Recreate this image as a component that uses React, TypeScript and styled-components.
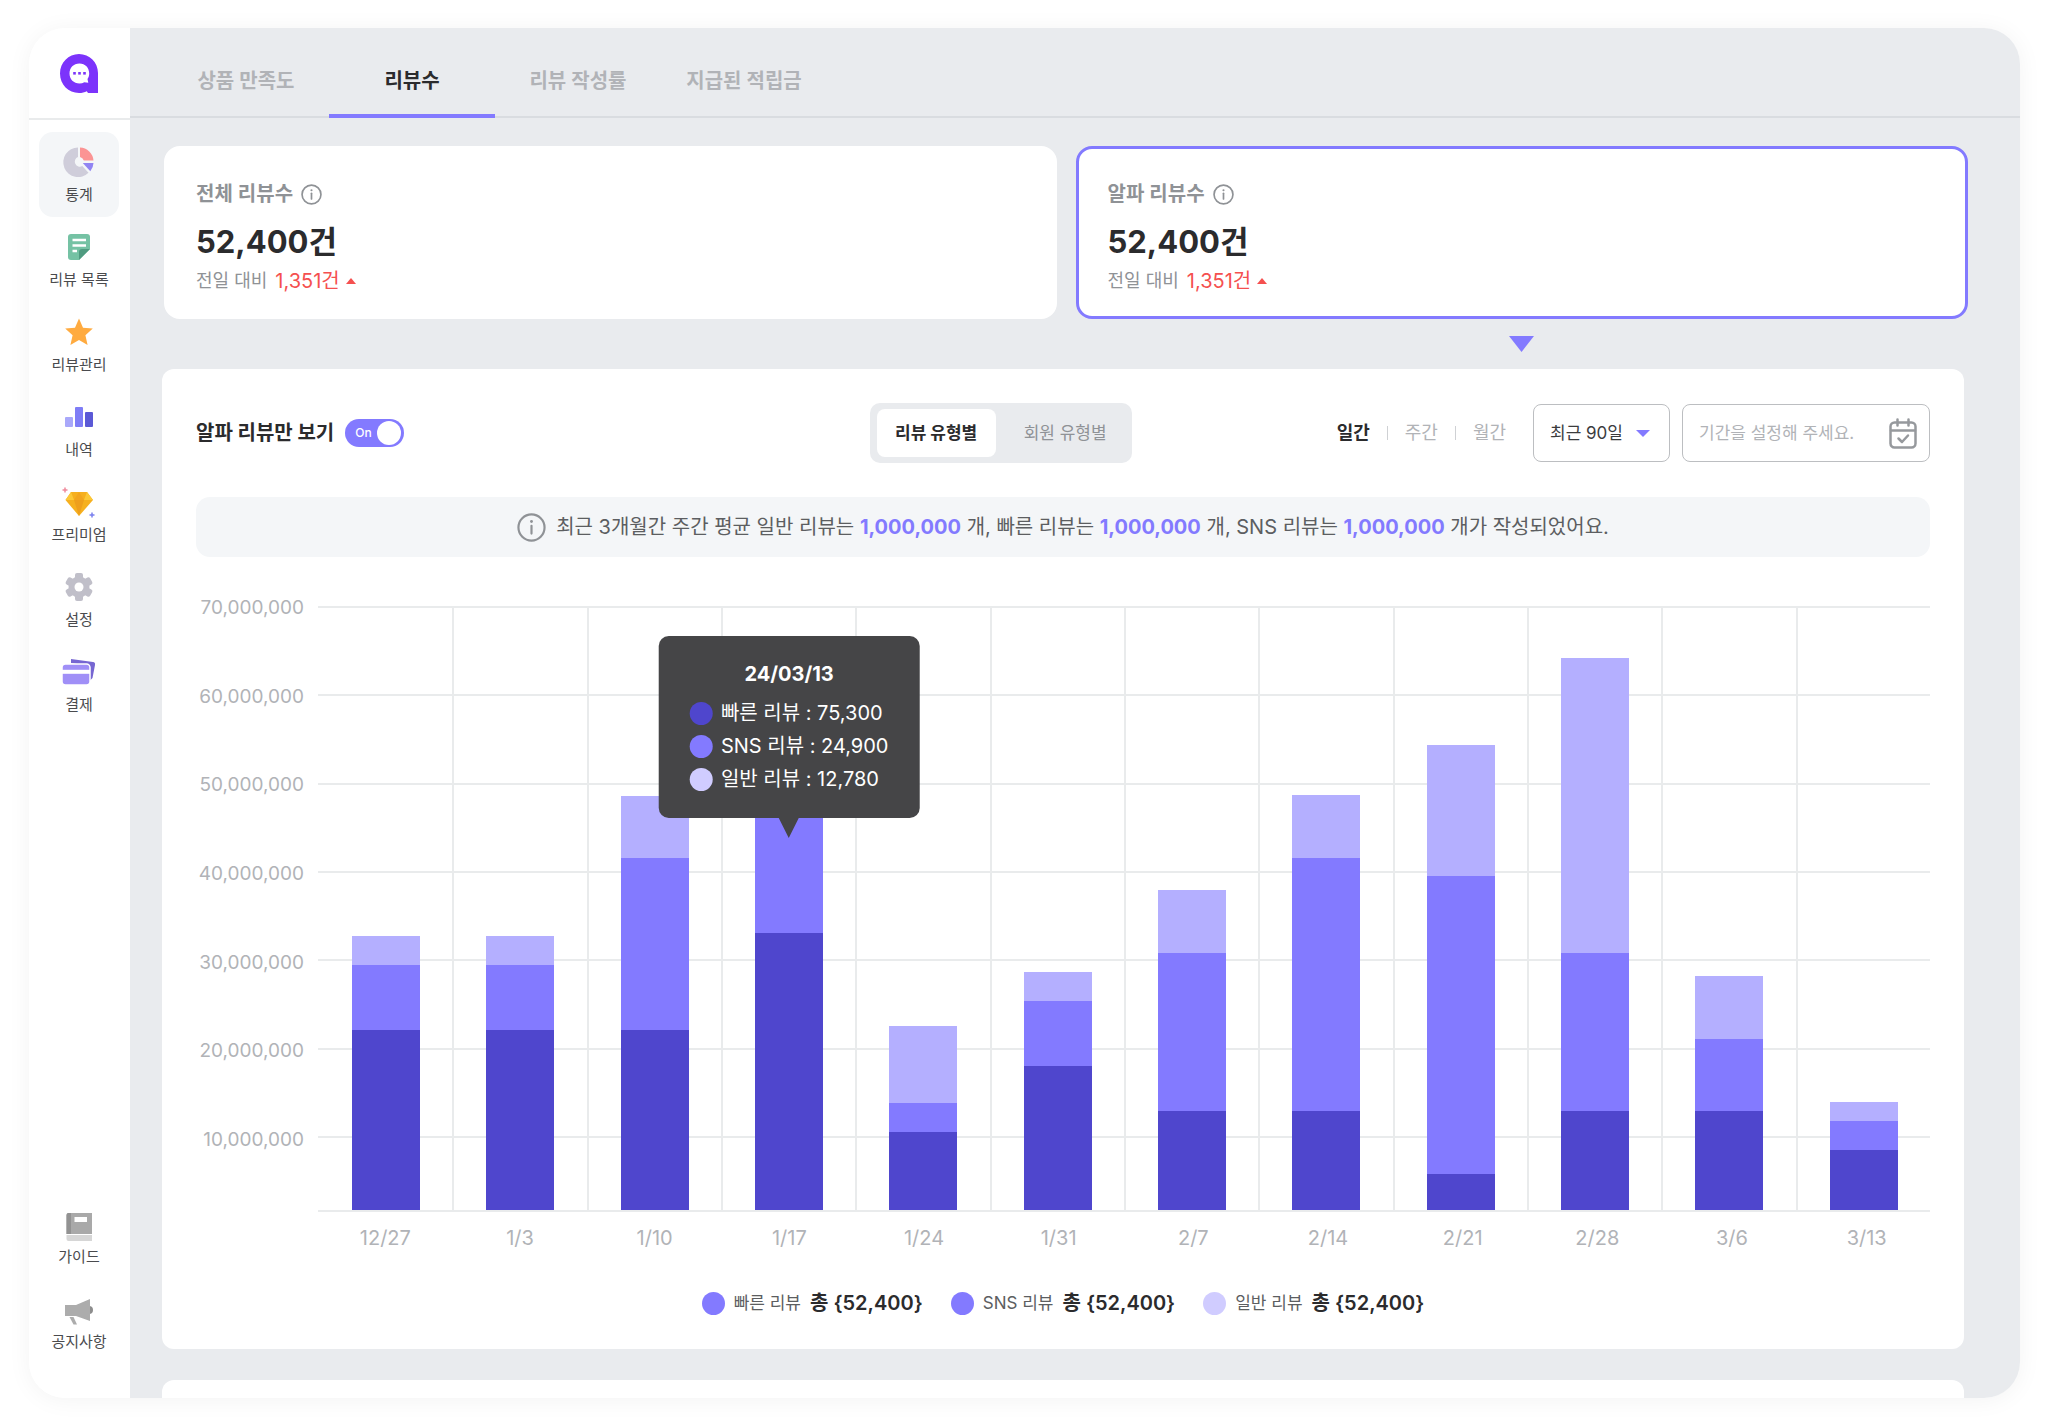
import React, { useState } from "react";
import styled, { createGlobalStyle, css } from "styled-components";

const colors = {
  ink: "#2b2b2d",
  text: "#5c5e61",
  muted: "#8f9296",
  faint: "#b1b3b7",
  line: "#e9ebec",
  canvas: "#e9ebee",
  soft: "#f4f6f8",
  primary: "#837aff",
  dark: "#4f46cd",
  light: "#b4afff",
  pale: "#d0ccff",
  red: "#f5504f",
};

const GlobalStyle = createGlobalStyle`
  * { box-sizing: border-box; }
  body {
    margin: 0;
    background: #ffffff;
    color: ${colors.ink};
    font-family: Inter, "Noto Sans CJK KR", sans-serif;
    font-size: 20px;
    line-height: 24px;
  }
  button, input, select { font: inherit; color: inherit; }
  button { border: 0; padding: 0; background: none; cursor: pointer; }
  h2, p, ul, dl, dd { margin: 0; padding: 0; }
  ul { list-style: none; }
`;

/* ---------- frame ---------- */

const Frame = styled.div`
  display: flex;
  min-height: calc(100vh - 58px);
  margin: 28px 28px 30px 29px;
  border-radius: 36px;
  overflow: hidden;
  background: #ffffff;
  box-shadow: 0 2px 24px rgba(0, 0, 0, 0.05);
`;

const Sidebar = styled.aside`
  display: flex;
  flex-direction: column;
  flex: none;
  width: 101px;
  background: #ffffff;
`;

const LogoLink = styled.a`
  display: flex;
  align-items: center;
  justify-content: center;
  height: 92px;
  border-bottom: 2px solid ${colors.line};
`;

const Menu = styled.ul<{ $bottom?: boolean }>`
  display: flex;
  flex-direction: column;
  padding: ${(p) => (p.$bottom ? "0 11px 31px 10px" : "12px 11px 12px 10px")};
  margin-top: ${(p) => (p.$bottom ? "auto" : "0")};
`;

const MenuLink = styled.a<{ $active?: boolean; $tight?: boolean }>`
  display: flex;
  flex-direction: column;
  align-items: center;
  height: 85px;
  padding-top: 15px;
  gap: ${(p) => (p.$tight ? "4px" : "7px")};
  border-radius: 14px;
  background: ${(p) => (p.$active ? colors.soft : "transparent")};
  color: #4a4b4e;
  font-size: 15px;
  line-height: 22px;
  white-space: nowrap;
  text-decoration: none;
`;

const Main = styled.main`
  display: flex;
  flex-direction: column;
  flex: 1;
  min-width: 0;
  background: ${colors.canvas};
`;

const TabBar = styled.nav`
  display: flex;
  height: 90px;
  padding-left: 33px;
  border-bottom: 2px solid #d9dce0;
`;

const Tab = styled.button<{ $active?: boolean }>`
  width: 166px;
  margin-bottom: -2px;
  padding-top: 20px;
  border-bottom: 4px solid ${(p) => (p.$active ? colors.primary : "transparent")};
  color: ${(p) => (p.$active ? colors.ink : colors.faint)};
  font-weight: 600;
`;

/* ---------- summary cards ---------- */

const Summary = styled.div`
  display: grid;
  grid-template-columns: 1fr 1fr;
  column-gap: 19px;
  margin: 28px 52px 0 34px;
`;

const Card = styled.section<{ $selected?: boolean }>`
  padding: 33px 29px 23px;
  border: 3px solid ${(p) => (p.$selected ? colors.primary : "#ffffff")};
  border-radius: 16px;
  background: #ffffff;
`;

const CardTitle = styled.h2`
  display: flex;
  align-items: center;
  gap: 8px;
  color: ${colors.muted};
  font-size: 20px;
  line-height: 24px;
  font-weight: 600;
`;

const CardValue = styled.p`
  margin-top: 16px;
  font-size: 31px;
  line-height: 40px;
  font-weight: 700;
`;

const CardDelta = styled.p`
  display: flex;
  align-items: center;
  margin-top: 7px;
  gap: 8px;
  color: ${colors.muted};
  font-size: 18px;
`;

const Increase = styled.span`
  display: flex;
  align-items: center;
  gap: 6px;
  color: ${colors.red};
  font-size: 20px;
`;

const Pointer = styled.div`
  grid-column: 2;
  display: flex;
  justify-content: center;
  padding: 17px 0;
`;

/* ---------- panel ---------- */

const Panel = styled.section`
  margin: 0 56px 0 32px;
  padding: 34px;
  border-radius: 12px;
  background: #ffffff;
`;

const NextPanel = styled(Panel)`
  flex: 1;
  margin-top: 31px;
  padding: 8px;
  border-radius: 12px 12px 0 0;
`;

const Toolbar = styled.div`
  display: grid;
  grid-template-columns: 27fr auto 32fr;
  align-items: center;
`;

const SwitchLabel = styled.label`
  display: flex;
  align-items: center;
  gap: 11px;
  font-weight: 700;
`;

const SwitchTrack = styled.span`
  display: grid;
  align-items: center;
  width: 59px;
  height: 28px;
  > * { grid-area: 1 / 1; }
`;

const SwitchInput = styled.input`
  appearance: none;
  display: flex;
  align-items: center;
  width: 100%;
  height: 100%;
  margin: 0;
  padding: 0 3px;
  border-radius: 14px;
  background: ${colors.faint};
  cursor: pointer;
  &::before {
    content: "";
    width: 24px;
    height: 24px;
    border-radius: 50%;
    background: #ffffff;
  }
  &:checked { background: ${colors.primary}; justify-content: flex-end; }
`;

const SwitchText = styled.span`
  padding-left: 10px;
  color: #ffffff;
  font-size: 12px;
  font-weight: 500;
  pointer-events: none;
`;

const Segments = styled.div`
  display: flex;
  gap: 10px;
  height: 60px;
  padding: 6px 7px;
  border-radius: 10px;
  background: ${colors.canvas};
`;

const Segment = styled.button<{ $active?: boolean }>`
  width: 119px;
  border-radius: 8px;
  background: ${(p) => (p.$active ? "#ffffff" : "transparent")};
  color: ${(p) => (p.$active ? colors.ink : colors.muted)};
  font-size: 17px;
  font-weight: ${(p) => (p.$active ? 700 : 400)};
`;

const Filters = styled.div`
  display: flex;
  align-items: center;
  justify-content: flex-end;
  gap: 12px;
`;

const Periods = styled.div`
  display: flex;
  align-items: center;
  margin-right: 15px;
`;

const Period = styled.button<{ $active?: boolean }>`
  font-size: 18px;
  color: ${(p) => (p.$active ? colors.ink : colors.faint)};
  font-weight: ${(p) => (p.$active ? 700 : 400)};
  & + & {
    margin-left: 17px;
    padding-left: 18px;
    background: linear-gradient(#cfd1d4, #cfd1d4) left center / 1px 14px no-repeat;
  }
`;

const field = css`
  display: flex;
  align-items: center;
  height: 58px;
  border: 1px solid #bcbec1;
  border-radius: 8px;
  background: #ffffff;
  font-size: 17px;
`;

const SelectField = styled.div`
  ${field}
  position: relative;
  width: 137px;
  svg {
    position: absolute;
    right: 19px;
    pointer-events: none;
  }
`;

const RangeSelect = styled.select`
  appearance: none;
  width: 100%;
  height: 100%;
  padding: 0 36px 0 16px;
  border: 0;
  border-radius: 8px;
  background: transparent;
  color: #3b3c3e;
`;

const DateField = styled.label`
  ${field}
  width: 248px;
  padding: 0 12px 0 16px;
`;

const DateInput = styled.input`
  flex: 1;
  min-width: 0;
  border: 0;
  padding: 0;
  background: transparent;
  outline: 0;
  &::placeholder { color: ${colors.faint}; opacity: 1; }
`;

const Notice = styled.p`
  display: flex;
  align-items: center;
  justify-content: center;
  gap: 10px;
  height: 60px;
  margin-top: 34px;
  border-radius: 14px;
  background: ${colors.soft};
  color: ${colors.text};
  font-size: 20px;
  b { color: ${colors.primary}; font-weight: 700; }
`;

/* ---------- chart ---------- */

const Chart = styled.div`
  display: grid;
  grid-template-columns: 122px 1fr;
  margin-top: 49px;
`;

const ScaleSteps = styled.div`
  display: flex;
  flex-direction: column;
  height: 606px;
`;

const AxisStep = styled.div`
  flex: 6 1 0;
  padding-right: 14px;
  color: ${colors.faint};
  font-size: 19px;
  text-align: right;
  &:last-child { flex-grow: 5; }
  span { display: block; margin-top: -10px; }
`;

const Plot = styled.div`
  position: relative;
  height: 606px;
  border-bottom: 2px solid ${colors.line};
`;

const GridLines = styled(ScaleSteps)`
  position: absolute;
  inset: 0;
  height: auto;
`;

const GridLine = styled.div`
  flex: 6 1 0;
  border-top: 2px solid ${colors.line};
  &:last-child { flex-grow: 5; }
`;

const Columns = styled.div`
  position: relative;
  display: grid;
  grid-template-columns: repeat(12, 1fr);
  height: 100%;
`;

const Column = styled.div`
  position: relative;
  display: flex;
  flex-direction: column;
  align-items: center;
  justify-content: flex-end;
  border-left: 2px solid ${colors.line};
  &:first-child { border-left-color: transparent; }
`;

const Bar = styled.div<{ $color: string }>`
  width: 68px;
  background: ${(p) => p.$color};
`;

const Dates = styled.div`
  grid-column: 2;
  display: grid;
  grid-template-columns: repeat(12, 1fr);
  margin: 14px -4px 0 0;
  color: ${colors.faint};
  text-align: center;
`;

const Tooltip = styled.div`
  position: absolute;
  z-index: 1;
  bottom: 392px;
  left: 50%;
  transform: translateX(-50%);
  display: flex;
  flex-direction: column;
  gap: 9px;
  padding: 26px 31px 27px;
  border-radius: 10px;
  background: #454547;
  color: #ffffff;
  white-space: nowrap;
  &::after {
    content: "";
    position: absolute;
    top: 100%;
    left: 50%;
    margin-left: -10px;
    border: 10px solid transparent;
    border-top: 20px solid #454547;
    border-bottom: 0;
  }
`;

const TooltipTitle = styled.strong`
  margin-bottom: 6px;
  text-align: center;
  font-weight: 700;
`;

const Keyed = styled.div`
  display: flex;
  align-items: center;
  gap: 8px;
`;

const Dot = styled.span<{ $color: string }>`
  flex: none;
  width: 23px;
  height: 23px;
  border-radius: 50%;
  background: ${(p) => p.$color};
`;

const Legend = styled.div`
  display: flex;
  justify-content: center;
  gap: 28px;
  margin-top: 41px;
  color: ${colors.text};
  font-size: 17px;
  ${Keyed} { gap: 9px; }
  b { color: ${colors.ink}; font-size: 20px; font-weight: 600; }
`;

/* ---------- drawings ---------- */

const Logo = () => (
  <svg width="39" height="39" viewBox="0 0 39 39" aria-hidden="true">
    <path d="M19 0C8.500 0 0 8.500 0 19.500S8.500 39 19 39c3 0 5.500-.7 7.800-1.800l1.200 1.800H38V19C38 8.500 29.500 0 19 0z" fill="#7c33fb" />
    <path d="M19.500 9.500c-6 0-10 4.300-10 10s4.200 10 10 10c1.800 0 3.400-.4 4.800-1.200l4 .5-.8-3.800c1.100-1.500 1.700-3.400 1.700-5.500 0-5.700-4-10-9.700-10z" fill="#fff" />
    <g fill="#7c33fb">
      <rect x="13.200" y="18" width="2.600" height="2.600" />
      <rect x="18.200" y="18" width="2.600" height="2.600" />
      <rect x="23.200" y="18" width="2.600" height="2.600" />
    </g>
  </svg>
);

const InfoIcon = ({ size, weight = 1.6 }: { size: number; weight?: number }) => (
  <svg width={size} height={size} viewBox="0 0 20 20" fill="none" stroke={colors.muted} strokeWidth={weight} aria-hidden="true">
    <circle cx="10" cy="10" r="9" />
    <path d="M10 8.800v5.400" strokeLinecap="round" />
    <circle cx="10" cy="5.900" r="1" fill={colors.muted} stroke="none" />
  </svg>
);

const Triangle = ({ width, height, color, up }: { width: number; height: number; color: string; up?: boolean }) => (
  <svg width={width} height={height} viewBox="0 0 10 10" preserveAspectRatio="none" aria-hidden="true">
    <path d={up ? "M0 10L5 0l5 10z" : "M0 0h10L5 10z"} fill={color} />
  </svg>
);

const CalendarIcon = () => (
  <svg width="28" height="31" viewBox="0 0 28 31" fill="none" stroke="#96999d" strokeWidth="2.500" strokeLinecap="round" strokeLinejoin="round" aria-hidden="true">
    <rect x="1.500" y="4.500" width="25" height="25" rx="4" />
    <path d="M2 12.500h24M8.500 1.500v6M19.500 1.500v6M9.500 20.500l3.500 3.500 6-6.500" />
  </svg>
);

const icons: Record<string, React.ReactNode> = {
  stats: (
    <>
      <path d="M14 0.500A14.800 14.800 0 1 0 24.500 25.800L18.300 19A5 5 0 1 1 14 10z" fill="#cfcdda" />
      <path d="M16 0.500A14 14 0 0 1 29.500 13.500H19.800A5.500 5.500 0 0 0 16 10z" fill="#fb9494" />
      <path d="M18.800 16H29.500A14 14 0 0 1 26.300 24.300z" fill="#9184f3" />
    </>
  ),
  list: (
    <>
      <path d="M7 2h16a3 3 0 0 1 3 3v12l-11 11H7a3 3 0 0 1-3-3V5a3 3 0 0 1 3-3z" fill="#75c2a4" />
      <path d="M26 17L15 28V20a3 3 0 0 1 3-3z" fill="#4f9b80" />
      <path d="M8.500 8H22M8.500 13.500H22M8.500 19H13" stroke="#fff" strokeWidth="2.600" />
    </>
  ),
  star: <path d="M15 1.500l4 9.200 9.800.9-7.400 6.600 2.200 9.800-8.600-5.100L6.400 28l2.200-9.800L1.200 11.600l9.800-.9z" fill="#ffab40" />,
  history: (
    <>
      <rect x="1" y="15" width="8" height="10" rx="1" fill="#a9a8fa" />
      <rect x="11" y="5" width="8" height="20" rx="1" fill="#7f7df6" />
      <rect x="21" y="10" width="8" height="15" rx="1" fill="#5b59d6" />
    </>
  ),
  premium: (
    <>
      <path d="M7 5h16l6 8-14 16L1.500 13z" fill="#f6b01f" />
      <path d="M7 5l3 8H1.500zM23 5l-3 8h9z" fill="#fcc837" />
      <path d="M10 13h10l-5 16z" fill="#ee9f1c" />
      <path d="M15 5l-5 8h10z" fill="#f2a51f" />
      <path d="M1 0.500v5M-1.500 3h5" stroke="#f08a9c" strokeWidth="1.500" />
      <path d="M28 25.500v5M25.500 28h5" stroke="#7a80ee" strokeWidth="1.500" />
    </>
  ),
  settings: (
    <>
      <g fill="#c0bfc9">
        <circle cx="15" cy="15" r="10.500" />
        {[0, 60, 120].map((a) => (
          <rect key={a} x="11" y="1" width="8" height="28" rx="2" transform={`rotate(${a} 15 15)`} />
        ))}
      </g>
      <circle cx="15" cy="15" r="4.500" fill="#fff" />
    </>
  ),
  payment: (
    <>
      <path d="M7 2l22 3a2.500 2.500 0 0 1 2 3l-2.500 13-3 3V9L7 6z" fill="#7666d2" />
      <rect x="-2" y="7" width="28" height="21" rx="3.500" fill="#a08ff7" stroke="#fff" strokeWidth="1.500" />
      <path d="M-2 14.800H26" stroke="#fff" strokeWidth="4" />
    </>
  ),
  guide: (
    <>
      <path d="M4.500 1H28v21H2.500V3a2 2 0 0 1 2-2z" fill="#a9a9a9" />
      <path d="M4.500 1H7v21H2.500V3a2 2 0 0 1 2-2z" fill="#929292" />
      <path d="M2.500 23H28v6H4.500a2 2 0 0 1-2-2z" fill="#d6d6d6" />
      <path d="M10.500 5H23v5H10.500z" fill="#fff" />
    </>
  ),
  notice: (
    <>
      <circle cx="25" cy="13" r="4" fill="#8d8d8d" />
      <path d="M1 8h11L26 2v22l-14-5H1z" fill="#acacac" />
      <path d="M5.500 20l4 7.500h3.500L9.500 20z" fill="#acacac" />
    </>
  ),
};

const MenuIcon = ({ name }: { name: string }) => (
  <svg width="30" height="30" viewBox="0 0 30 30" overflow="visible" aria-hidden="true">
    {icons[name]}
  </svg>
);

/* ---------- data ---------- */

const menu = [
  { icon: "stats", label: "통계" },
  { icon: "list", label: "리뷰 목록" },
  { icon: "star", label: "리뷰관리" },
  { icon: "history", label: "내역" },
  { icon: "premium", label: "프리미엄" },
  { icon: "settings", label: "설정" },
  { icon: "payment", label: "결제" },
];

const supportMenu = [
  { icon: "guide", label: "가이드" },
  { icon: "notice", label: "공지사항" },
];

const tabs = ["상품 만족도", "리뷰수", "리뷰 작성률", "지급된 적립금"];
const cards = ["전체 리뷰수", "알파 리뷰수"];
const scale = ["70,000,000", "60,000,000", "50,000,000", "40,000,000", "30,000,000", "20,000,000", "10,000,000"];

// Bar segments as heights on the plot: [fast, SNS, regular]
const series: { date: string; parts: [number, number, number] }[] = [
  { date: "12/27", parts: [180, 65, 29] },
  { date: "1/3", parts: [180, 65, 29] },
  { date: "1/10", parts: [180, 172, 62] },
  { date: "1/17", parts: [277, 150, 60] },
  { date: "1/24", parts: [78, 29, 77] },
  { date: "1/31", parts: [144, 65, 29] },
  { date: "2/7", parts: [99, 158, 63] },
  { date: "2/14", parts: [99, 253, 63] },
  { date: "2/21", parts: [36, 298, 131] },
  { date: "2/28", parts: [99, 158, 295] },
  { date: "3/6", parts: [99, 72, 63] },
  { date: "3/13", parts: [60, 29, 19] },
];

const detail = [
  { color: colors.dark, text: "빠른 리뷰 : 75,300" },
  { color: colors.primary, text: "SNS 리뷰 : 24,900" },
  { color: colors.pale, text: "일반 리뷰 : 12,780" },
];

const legend = [
  { color: colors.primary, name: "빠른 리뷰" },
  { color: colors.primary, name: "SNS 리뷰" },
  { color: colors.pale, name: "일반 리뷰" },
];

const MenuItems = ({ items, active, tight }: { items: typeof menu; active?: string; tight?: boolean }) => (
  <>
    {items.map((item) => (
      <li key={item.label}>
        <MenuLink href="#" $active={item.label === active} $tight={tight}>
          <MenuIcon name={item.icon} />
          {item.label}
        </MenuLink>
      </li>
    ))}
  </>
);

export default function App() {
  const [tab, setTab] = useState("리뷰수");
  const [kind, setKind] = useState("리뷰 유형별");
  const [period, setPeriod] = useState("일간");
  const [alphaOnly, setAlphaOnly] = useState(true);

  return (
    <>
      <GlobalStyle />
      <Frame>
        <Sidebar>
          <LogoLink href="#" aria-label="alpha">
            <Logo />
          </LogoLink>
          <Menu>
            <MenuItems items={menu} active="통계" />
          </Menu>
          <Menu $bottom>
            <MenuItems items={supportMenu} tight />
          </Menu>
        </Sidebar>

        <Main>
          <TabBar>
            {tabs.map((name) => (
              <Tab key={name} $active={name === tab} onClick={() => setTab(name)}>
                {name}
              </Tab>
            ))}
          </TabBar>

          <Summary>
            {cards.map((title, i) => (
              <Card key={title} $selected={i === 1}>
                <CardTitle>
                  {title}
                  <InfoIcon size={21} />
                </CardTitle>
                <CardValue>52,400건</CardValue>
                <CardDelta>
                  전일 대비
                  <Increase>
                    1,351건
                    <Triangle width={10} height={6} color={colors.red} up />
                  </Increase>
                </CardDelta>
              </Card>
            ))}
            <Pointer>
              <Triangle width={25} height={16} color={colors.primary} />
            </Pointer>
          </Summary>

          <Panel>
            <Toolbar>
              <SwitchLabel>
                알파 리뷰만 보기
                <SwitchTrack>
                  <SwitchInput type="checkbox" role="switch" checked={alphaOnly} onChange={(e) => setAlphaOnly(e.target.checked)} />
                  {alphaOnly && <SwitchText>On</SwitchText>}
                </SwitchTrack>
              </SwitchLabel>

              <Segments>
                {["리뷰 유형별", "회원 유형별"].map((name) => (
                  <Segment key={name} $active={name === kind} onClick={() => setKind(name)}>
                    {name}
                  </Segment>
                ))}
              </Segments>

              <Filters>
                <Periods>
                  {["일간", "주간", "월간"].map((name) => (
                    <Period key={name} $active={name === period} onClick={() => setPeriod(name)}>
                      {name}
                    </Period>
                  ))}
                </Periods>
                <SelectField>
                  <RangeSelect aria-label="조회 기간">
                    <option>최근 90일</option>
                  </RangeSelect>
                  <Triangle width={14} height={7} color={colors.primary} />
                </SelectField>
                <DateField>
                  <DateInput type="text" placeholder="기간을 설정해 주세요." aria-label="기간" />
                  <CalendarIcon />
                </DateField>
              </Filters>
            </Toolbar>

            <Notice>
              <InfoIcon size={29} weight={1.5} />
              <span>
                최근 3개월간 주간 평균 일반 리뷰는 <b>1,000,000</b> 개, 빠른 리뷰는 <b>1,000,000</b> 개, SNS 리뷰는{" "}
                <b>1,000,000</b> 개가 작성되었어요.
              </span>
            </Notice>

            <Chart>
              <ScaleSteps>
                {scale.map((value) => (
                  <AxisStep key={value}>
                    <span>{value}</span>
                  </AxisStep>
                ))}
              </ScaleSteps>
              <Plot>
                <GridLines>
                  {scale.map((value) => (
                    <GridLine key={value} />
                  ))}
                </GridLines>
                <Columns>
                  {series.map(({ date, parts: [fast, sns, regular] }) => (
                    <Column key={date}>
                      <Bar $color={colors.light} style={{ height: regular }} />
                      <Bar $color={colors.primary} style={{ height: sns }} />
                      <Bar $color={colors.dark} style={{ height: fast }} />
                      {date === "1/17" && (
                        <Tooltip role="tooltip">
                          <TooltipTitle>24/03/13</TooltipTitle>
                          {detail.map((row) => (
                            <Keyed key={row.text}>
                              <Dot $color={row.color} />
                              {row.text}
                            </Keyed>
                          ))}
                        </Tooltip>
                      )}
                    </Column>
                  ))}
                </Columns>
              </Plot>
              <Dates>
                {series.map(({ date }) => (
                  <span key={date}>{date}</span>
                ))}
              </Dates>
            </Chart>

            <Legend>
              {legend.map((item) => (
                <Keyed key={item.name}>
                  <Dot $color={item.color} />
                  {item.name}
                  <b>총 {"{52,400}"}</b>
                </Keyed>
              ))}
            </Legend>
          </Panel>
          <NextPanel />
        </Main>
      </Frame>
    </>
  );
}
